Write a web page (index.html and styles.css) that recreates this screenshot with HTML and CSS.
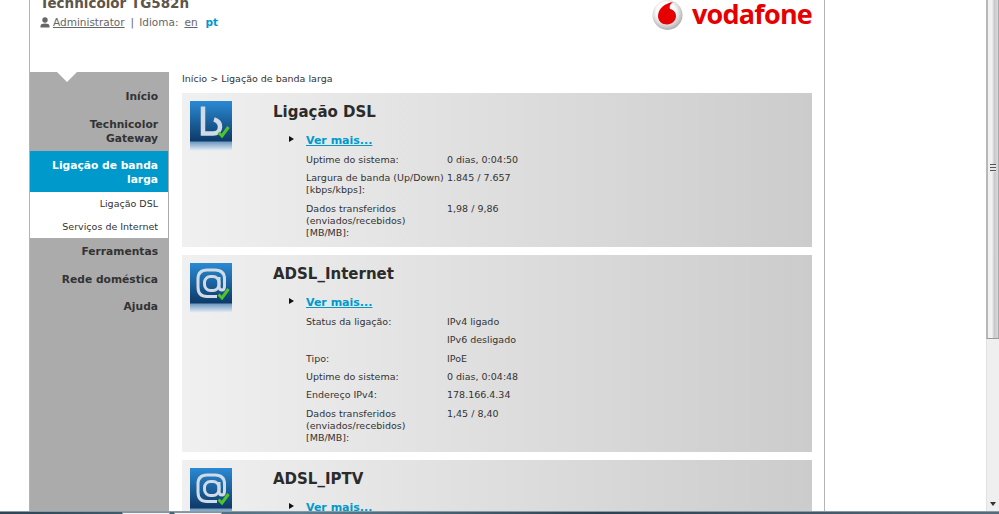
FILE: index.html
```html
<!DOCTYPE html>
<html lang="pt">
<head>
<meta charset="utf-8">
<title>Technicolor TG582n</title>
<link rel="stylesheet" href="styles.css">
</head>
<body>
<div class="viewport">
  <div class="page">
    <header class="header">
      <div class="identity">
        <h1 class="device">Technicolor TG582n</h1>
        <div class="userline">
          <svg class="user-icon" width="10" height="11" viewBox="0 0 10 11"><circle cx="5" cy="3" r="2.7" fill="#666"/><path d="M0.5 10.5V9c0-1.6 2-2.4 4.5-2.4S9.5 7.4 9.5 9v1.5z" fill="#666"/></svg>
          <a class="link" href="#">Administrator</a><span class="sep">|</span><span>Idioma:</span><a class="link lang" href="#">en</a><span class="current">pt</span>
        </div>
      </div>
      <div class="brand">
        <svg class="brand-mark" width="31" height="31" viewBox="0 0 31 31">
          <defs><radialGradient id="ball" cx="45%" cy="40%" r="60%"><stop offset="0.55" stop-color="#fafafa"/><stop offset="1" stop-color="#adadad"/></radialGradient></defs>
          <circle cx="15.5" cy="15" r="15" fill="url(#ball)"/>
          <path d="M21.5 2C12.5 3 6 9 6 16c0 5 4 8.500 9 8.500s9-4 9-8.500c0-4-3-6.500-6-7-1-3 .5-5.500 3.500-7z" fill="#e60000"/>
        </svg>
        <span class="brand-name">vodafone</span>
      </div>
    </header>
    <div class="body">
      <nav class="sidebar">
        <span class="notch"></span>
        <a class="nav-item" href="#">Início</a>
        <a class="nav-item" href="#">Technicolor Gateway</a>
        <a class="nav-item active" href="#">Ligação de banda larga</a>
        <div class="subnav">
          <a class="sub-item" href="#">Ligação DSL</a>
          <a class="sub-item" href="#">Serviços de Internet</a>
        </div>
        <a class="nav-item" href="#">Ferramentas</a>
        <a class="nav-item" href="#">Rede doméstica</a>
        <a class="nav-item" href="#">Ajuda</a>
      </nav>
      <main class="content">
        <div class="crumbs">Início &gt; Ligação de banda larga</div>

        <section class="panel">
          <div class="tile">
            <svg width="42" height="50" viewBox="0 0 42 50"><use href="#tile-bg"/><path d="M13 5.500V32.500H23C27.500 32.500 30 29.500 30 26C30 22 27.500 19.500 24 18.500" fill="none" stroke="#cfdbe6" stroke-width="4.500"/><use href="#check"/></svg>
          </div>
          <div class="panel-body">
            <h2 class="panel-title">Ligação DSL</h2>
            <a class="more" href="#">Ver mais...</a>
            <dl class="stats">
              <dt>Uptime do sistema:</dt><dd>0 dias, 0:04:50</dd>
              <dt>Largura de banda (Up/Down) [kbps/kbps]:</dt><dd>1.845 / 7.657</dd>
              <dt>Dados transferidos (enviados/recebidos) [MB/MB]:</dt><dd>1,98 / 9,86</dd>
            </dl>
          </div>
        </section>

        <section class="panel">
          <div class="tile">
            <svg width="42" height="50" viewBox="0 0 42 50"><use href="#tile-bg"/><use href="#at"/><use href="#check"/></svg>
          </div>
          <div class="panel-body">
            <h2 class="panel-title">ADSL_Internet</h2>
            <a class="more" href="#">Ver mais...</a>
            <dl class="stats">
              <dt>Status da ligação:</dt><dd>IPv4 ligado</dd>
              <dt></dt><dd>IPv6 desligado</dd>
              <dt>Tipo:</dt><dd>IPoE</dd>
              <dt>Uptime do sistema:</dt><dd>0 dias, 0:04:48</dd>
              <dt>Endereço IPv4:</dt><dd>178.166.4.34</dd>
              <dt>Dados transferidos (enviados/recebidos) [MB/MB]:</dt><dd>1,45 / 8,40</dd>
            </dl>
          </div>
        </section>

        <section class="panel">
          <div class="tile">
            <svg width="42" height="50" viewBox="0 0 42 50"><use href="#tile-bg"/><use href="#at"/><use href="#check"/></svg>
          </div>
          <div class="panel-body">
            <h2 class="panel-title">ADSL_IPTV</h2>
            <a class="more" href="#">Ver mais...</a>
          </div>
        </section>
      </main>
    </div>
  </div>
  <aside class="scrollbar">
    <div class="thumb"><span class="grip"></span></div>
    <span class="arrow"></span>
  </aside>
  <footer class="taskbar"><span class="task"></span><span class="task"></span></footer>
</div>
<svg class="defs" width="0" height="0">
  <defs>
    <linearGradient id="tile" x1="0" y1="0" x2="0" y2="1"><stop offset="0" stop-color="#2a8ad4"/><stop offset="0.8" stop-color="#0e3a68"/><stop offset="0.82" stop-color="#6f9cc3"/><stop offset="1" stop-color="#eef2f6"/></linearGradient>
    <symbol id="tile-bg" viewBox="0 0 42 50" width="42" height="50"><rect width="42" height="50" fill="url(#tile)"/></symbol>
    <symbol id="at" viewBox="0 0 42 50" width="42" height="50"><path d="M27 33.500H17C11 33.500 8 30 8 24V16C8 10 11.500 7 17 7H25C31 7 34.500 10 34.500 16V23C34.500 26 33.300 27 32 27S29 26 29 23V14" fill="none" stroke="#cfdbe6" stroke-width="3"/><rect x="14.500" y="13.500" width="14.500" height="14" rx="6" fill="none" stroke="#cfdbe6" stroke-width="3"/></symbol>
    <symbol id="check" viewBox="0 0 42 50" width="42" height="50"><path d="M28.500 31.500l3.500 3.500 6.500-9" fill="none" stroke="#4fc52c" stroke-width="3"/></symbol>
  </defs>
</svg>
</body>
</html>
```
FILE: styles.css
```css
* { box-sizing: border-box; }
html, body { margin: 0; padding: 0; height: 100%; overflow: hidden; background: #fff; }
body { font-family: "DejaVu Sans", Verdana, sans-serif; color: #333; }
a { text-decoration: none; }
.defs { position: absolute; }

.viewport { position: relative; width: 999px; height: 514px; overflow: hidden; }
.page {
  width: 796px; height: 514px; margin-left: 29px;
  border-left: 1px solid #b4b4b4; border-right: 1px solid #b4b4b4;
  background: #fff;
}

.header { height: 72px; display: flex; justify-content: space-between; padding: 0 12px 0 10px; }
.device { margin: -6px 0 0; font-size: 13.500px; line-height: 18px; font-weight: bold; color: #5e5549; }
.userline { display: flex; align-items: center; margin-top: 3px; font-size: 10.500px; line-height: 14px; color: #666; }
.user-icon { margin-right: 3px; }
.link { color: #666; text-decoration: underline; }
.sep { margin: 0 5px 0 6px; }
.lang { margin: 0 8px 0 6px; }
.current { color: #0099cc; font-weight: bold; }

.brand { display: flex; align-items: flex-start; height: 32px; }
.brand-mark { margin: 0 9px 0 0; }
.brand-name { font-family: "Open Sans", sans-serif; font-weight: 700; font-size: 27px; line-height: 28px; color: #e60000; letter-spacing: -.8px; }

.body { display: flex; height: 442px; }
.sidebar { position: relative; width: 139px; flex: none; background: #ababab; padding-top: 18px; }
.notch {
  position: absolute; left: 27px; top: 0; width: 0; height: 0;
  border-left: 10px solid transparent; border-right: 10px solid transparent; border-top: 10px solid #fff;
}
.nav-item {
  display: block; padding: 0 11px 0 20px; text-align: right;
  font-size: 10.700px; line-height: 14px; font-weight: bold; color: #333;
  margin-bottom: 14px;
}
.nav-item.active { background: #0099cc; color: #fff; padding: 8px 10px 5px 20px; margin: -9px 1px 0 0; }
.subnav { background: #fff; padding: 1px 10px 0 0; margin: 0 1px 7px 0; text-align: right; }
.sub-item { display: block; font-size: 9.500px; line-height: 22.500px; color: #333; }
.subnav ~ .nav-item { margin-bottom: 13.500px; }

.content { flex: 1; padding: 0 12px 0 13px; min-width: 0; }
.crumbs { font-size: 9.500px; line-height: 13px; height: 21px; color: #333; }

.panel {
  display: flex; margin-bottom: 8px; padding: 8px 0 8.600px 8px;
  background: linear-gradient(90deg, #f0f0f0, #cccccc);
}
.tile { width: 42px; height: 50px; flex: none; }
.tile svg { display: block; }
.panel-body { margin-left: 41px; flex: 1; min-width: 0; }
.panel-title { margin: 2px 0 0; font-size: 15px; line-height: 18px; font-weight: bold; color: #2b2b2b; }
.more {
  display: block; position: relative; margin: 13px 0 0 33px;
  font-size: 11px; line-height: 14px; font-weight: bold; color: #0099cc; text-decoration: underline;
}
.more::before {
  content: ""; position: absolute; left: -17px; top: 2px;
  border-left: 5px solid #111; border-top: 3px solid transparent; border-bottom: 3px solid transparent;
}
.stats {
  display: grid; grid-template-columns: 141px 1fr; row-gap: 6.300px; align-items: start;
  margin: 6px 0 0 33px; font-size: 9.500px; line-height: 12px; color: #333;
}
.stats dt, .stats dd { margin: 0; }

.scrollbar { position: absolute; right: 0; top: 0; bottom: 0; width: 13px; background: #efefef; border-left: 1px solid #e2e2e2; }
.thumb {
  position: relative; height: 339px; margin-left: -1px;
  background: linear-gradient(90deg, #f0f0f0, #f2f2f2 40%, #c8c8cc 62%, #dadada);
  border-left: 2px solid #b8b8b8; border-right: 1px solid #aaa; border-bottom: 1px solid #999;
}
.grip {
  position: absolute; left: 2px; top: 164px; width: 6px; height: 8px;
  background: repeating-linear-gradient(180deg, #555 0 1px, #e8e8e8 1px 3px);
}
.arrow {
  position: absolute; left: 3px; bottom: 8px;
  border-top: 4px solid #333; border-left: 3px solid transparent; border-right: 3px solid transparent;
}
.taskbar {
  position: absolute; left: 0; right: 0; bottom: 0; height: 3px; display: flex; gap: 4px; padding-left: 122px;
  background: linear-gradient(90deg, #2c4454, #5d7d90 30%, #2d4252 60%, #546c7c);
  border-top: 1px solid #8c9aa4;
}
.task { width: 48px; height: 2px; background: #f2f4f6; border: 1px solid #88949c; border-bottom: 0; }
```
